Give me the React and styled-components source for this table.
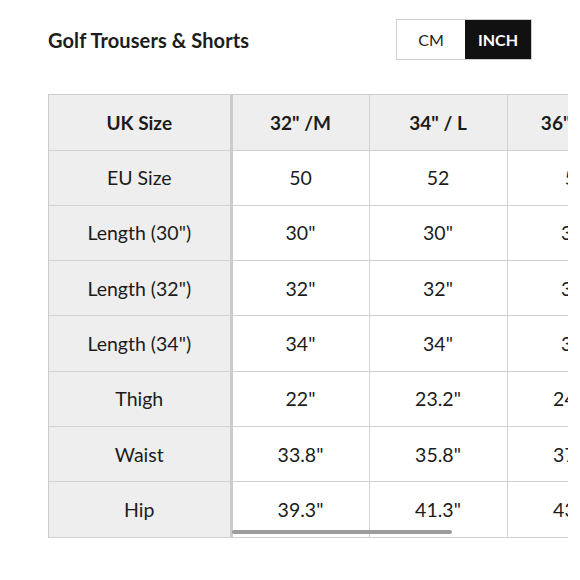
import React from "react";
import styled, { createGlobalStyle } from "styled-components";

const Global = createGlobalStyle`
  html, body { margin: 0; padding: 0; background: #fff; }
  body { font-family: Lato, "Noto Sans", "Liberation Sans", sans-serif; color: #1a1a1a; }
  * { box-sizing: border-box; }
`;

const Page = styled.div`
  padding: 19px 0 0 48px;
  width: 580px;
`;

const Header = styled.div`
  display: flex;
  align-items: center;
  justify-content: space-between;
  width: 484px;
  height: 41px;
`;

const Title = styled.h1`
  margin: 0;
  font-size: 20px;
  font-weight: 700;
  color: #1c1c1c;
  letter-spacing: 0.1px;
`;

const Toggle = styled.div`
  display: flex;
  border: 1px solid #cfcfcf;
  height: 41px;
`;

const ToggleButton = styled.button`
  border: none;
  margin: 0;
  padding: 0;
  width: ${(p) => p.$w}px;
  height: 100%;
  font-family: inherit;
  font-size: 16px;
  font-weight: ${(p) => (p.$active ? 700 : 400)};
  background: ${(p) => (p.$active ? "#111" : "#fff")};
  color: ${(p) => (p.$active ? "#fff" : "#222")};
  cursor: pointer;
`;

const Frame = styled.div`
  position: relative;
  margin-top: 34px;
  width: 520px;
  overflow: hidden;
`;

const Table = styled.table`
  border-collapse: separate;
  border-spacing: 0;
  border-top: 1.5px solid #cdcdcd;
  border-left: 1.5px solid #cdcdcd;
  table-layout: fixed;
`;

const Cell = styled.td`
  height: ${(p) => (p.$head ? 55.5 : 55.3)}px;
  width: ${(p) => p.$w}px;
  min-width: ${(p) => p.$w}px;
  max-width: ${(p) => p.$w}px;
  padding: 0;
  text-align: center;
  vertical-align: middle;
  font-size: ${(p) => (p.$head ? 19 : 19.5)}px;
  font-weight: ${(p) => (p.$head ? 700 : 400)};
  color: #1c1c1c;
  white-space: nowrap;
  background: ${(p) => (p.$shade ? "#eeeeee" : "#fff")};
  border-bottom: 1.5px solid #d2d2d2;
  border-right: ${(p) => (p.$sticky ? "3.5px solid #cbcbcb" : "1px solid #d2d2d2")};
`;

const Thumb = styled.div`
  position: absolute;
  left: 184px;
  bottom: 4px;
  width: 220px;
  height: 4px;
  border-radius: 2px;
  background: #9c9c9c;
`;

const cols = [`32" /M`, `34" / L`, `36" / XL`, `38" / XXL`];
const rows = [
  ["EU Size", "50", "52", "54", "56"],
  [`Length (30")`, `30"`, `30"`, `30"`, `30"`],
  [`Length (32")`, `32"`, `32"`, `32"`, `32"`],
  [`Length (34")`, `34"`, `34"`, `34"`, `34"`],
  ["Thigh", `22"`, `23.2"`, `24.4"`, `25.6"`],
  ["Waist", `33.8"`, `35.8"`, `37.8"`, `39.8"`],
  ["Hip", `39.3"`, `41.3"`, `43.3"`, `45.3"`],
];
const widths = [137, 138, 138, 138];

export default function App() {
  return (
    <>
      <Global />
      <Page>
        <Header>
          <Title>Golf Trousers &amp; Shorts</Title>
          <Toggle>
            <ToggleButton $w={68}>CM</ToggleButton>
            <ToggleButton $w={66} $active>INCH</ToggleButton>
          </Toggle>
        </Header>
        <Frame>
          <Table>
            <tbody>
              <tr>
                <Cell as="th" $head $shade $sticky $w={183.5}>UK Size</Cell>
                {cols.map((c, i) => (
                  <Cell as="th" key={c} $head $shade $w={widths[i]}>{c}</Cell>
                ))}
              </tr>
              {rows.map((r) => (
                <tr key={r[0]}>
                  <Cell $shade $sticky $w={183.5}>{r[0]}</Cell>
                  {r.slice(1).map((v, i) => (
                    <Cell key={i} $w={widths[i]}>{v}</Cell>
                  ))}
                </tr>
              ))}
            </tbody>
          </Table>
          <Thumb />
        </Frame>
      </Page>
    </>
  );
}
